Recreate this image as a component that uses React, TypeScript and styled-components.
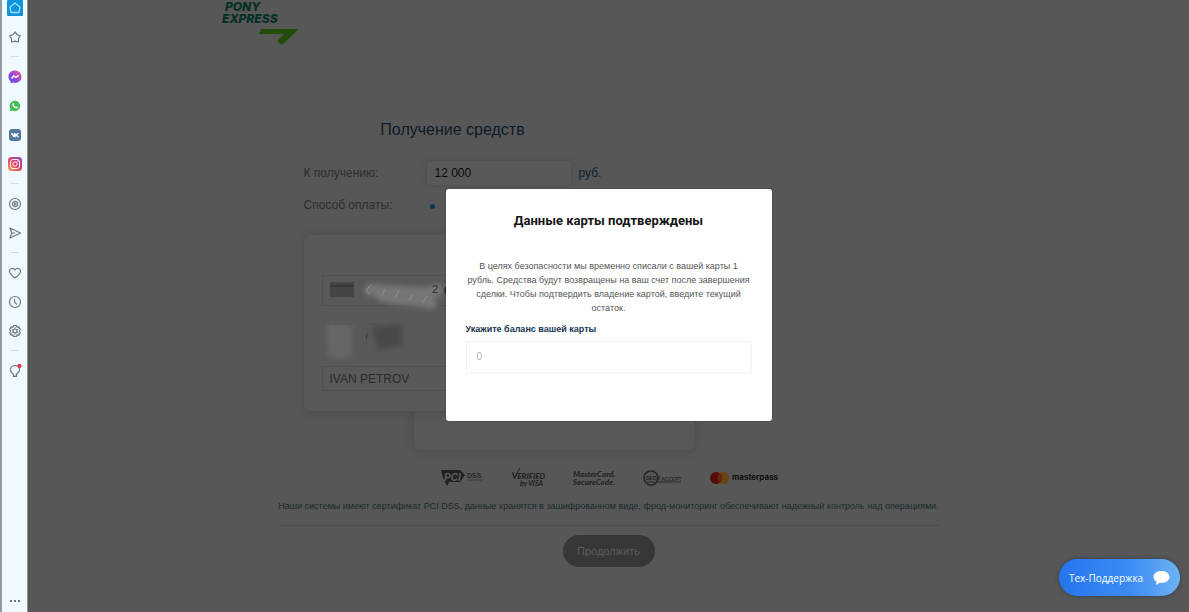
import React from "react";
import styled, { createGlobalStyle } from "styled-components";

const Global = createGlobalStyle`
  *, *::before, *::after { box-sizing: border-box; }
  html, body, #root { height: 100%; }
  body { margin: 0; background: #575757; font-family: "Liberation Sans", Arial, sans-serif; }
  button, input { font: inherit; }
  button { padding: 0; border: 0; background: none; cursor: pointer; }
`;

const Shell = styled.div`
  display: flex;
  min-height: 100%;
`;

const Sidebar = styled.nav`
  flex: none;
  width: 28px;
  display: flex;
  flex-direction: column;
  align-items: center;
  background: #eff9fe;
  border-left: 2px solid #8f9aa5;
  border-right: 1px solid #8b9095;
`;

const SideButton = styled.button<{ $edge?: "top" | "bottom" }>`
  display: flex;
  align-items: center;
  justify-content: center;
  width: 24px;
  height: ${(p) => (p.$edge ? 22 : 29)}px;
  padding-bottom: ${(p) => (p.$edge === "top" ? 6 : 0)}px;
  svg { display: block; flex: none; }
`;

const SideRule = styled.hr`
  width: 8px;
  height: 1px;
  margin: 5px 0;
  border: 0;
  background: #d3dce2;
`;

const Spacer = styled.div`
  flex: 1;
`;

const Stage = styled.main`
  position: relative;
  flex: 1;
  min-width: 0;
  display: flex;
  flex-direction: column;
  align-items: center;
  border-bottom: 1px solid #64545a;
`;

const Header = styled.header`
  width: 100%;
  max-width: 774px;
  height: 120px;
  svg { display: block; }
`;

const Form = styled.form`
  width: 100%;
  max-width: 610px;
`;

const Title = styled.h1`
  width: 298px;
  margin: 0;
  font-size: 16px;
  line-height: 20px;
  font-weight: 400;
  text-align: center;
  color: #0e1a28;
`;

const Row = styled.div<{ $gap: number }>`
  display: flex;
  align-items: center;
  height: 24px;
  margin-top: ${(p) => p.$gap}px;
  font-size: 12px;
  color: #2b2f31;
`;

const RowLabel = styled.label`
  width: 123px;
`;

const Amount = styled.input`
  width: 144px;
  height: 24px;
  padding: 0 8px;
  border: 0;
  border-radius: 3px;
  background: #595959;
  box-shadow: 0 0 5px #4b4b4b;
  font-size: 12px;
  color: #0a0a0a;
  outline: 0;
`;

const Unit = styled.span`
  margin-left: 8px;
  color: #10202c;
`;

const Method = styled.input`
  appearance: none;
  width: 5px;
  height: 5px;
  margin: 2px 3px 0;
  border-radius: 50%;
  background: #063a55;
`;

const Cards = styled.div`
  display: grid;
  grid-template-columns: 110px 170px 110px;
  grid-template-rows: 40px 136px 39px;
  margin-top: 18px;
`;

const BackCard = styled.div`
  grid-area: 2 / 2 / 4 / 4;
  border-radius: 6px;
  background: #585858;
  box-shadow: 0 1px 8px #4b4b4b;
`;

const FrontCard = styled.div`
  grid-area: 1 / 1 / 3 / 3;
  display: flex;
  flex-direction: column;
  padding: 40px 18px 0;
  border-radius: 6px;
  background: #595959;
  box-shadow: 0 1px 8px #4b4b4b;
`;

const CardField = styled.div`
  position: relative;
  height: 31px;
  border: 1px solid #515151;
`;

const Smudge = styled.svg`
  position: absolute;
  left: 0;
  top: 0;
  overflow: visible;
`;

const CardMeta = styled.div`
  height: 60px;
  svg { display: block; overflow: visible; }
`;

const Holder = styled.input`
  width: 100%;
  height: 25px;
  padding: 0 7px;
  border: 1px solid #505050;
  background: transparent;
  font-size: 12px;
  color: #2b2b2b;
  outline: 0;
`;

const Footer = styled.footer`
  width: 100%;
  max-width: 662px;
  display: flex;
  flex-direction: column;
  align-items: center;
`;

const Badges = styled.div`
  display: flex;
  align-items: center;
  justify-content: space-between;
  width: 336px;
  height: 20px;
  margin-top: 18px;
  svg { display: block; overflow: visible; }
`;

const Notice = styled.p`
  align-self: stretch;
  margin: 0;
  padding: 12px 0 13px;
  border-bottom: 1px solid #4d4d4d;
  font-size: 9px;
  line-height: 12px;
  text-align: center;
  white-space: nowrap;
  color: #1b2a2b;
`;

const Continue = styled.button`
  width: 92px;
  height: 32px;
  margin-top: 9px;
  border-radius: 16px;
  background: #373737;
  color: #5c5c5c;
  font-size: 11px;
`;

const Overlay = styled.div`
  position: absolute;
  inset: 0;
  display: flex;
  align-items: center;
  justify-content: center;
  padding-bottom: 2px;
`;

const Dialog = styled.section`
  width: 326px;
  height: 232px;
  padding: 22px 20px;
  border-radius: 3px;
  background: #fff;
  box-shadow: 0 0 2px #444;
`;

const DialogTitle = styled.h2`
  margin: 0;
  font-family: Roboto, "Liberation Sans", sans-serif;
  font-size: 13px;
  line-height: 20px;
  text-align: center;
  color: #161616;
`;

const DialogText = styled.p`
  margin: 28px 0 0;
  font-size: 9px;
  line-height: 14px;
  text-align: center;
  color: #555;
`;

const BalanceLabel = styled.label`
  display: block;
  margin-top: 6px;
  font-size: 9px;
  line-height: 16px;
  font-weight: 700;
  color: #17354f;
`;

const Balance = styled.input`
  display: block;
  width: 100%;
  height: 32px;
  margin-top: 4px;
  padding: 0 10px;
  border: 1px solid #f1f1f1;
  border-radius: 2px;
  background: #fff;
  font-size: 10px;
  outline: 0;
  &::placeholder { color: #b5b5b5; opacity: 1; }
`;

const Support = styled.button`
  position: absolute;
  right: 9px;
  bottom: 15px;
  display: flex;
  align-items: center;
  justify-content: space-between;
  width: 121px;
  height: 37px;
  padding: 0 10px;
  border-radius: 19px;
  background: linear-gradient(90deg, #2475ee, #3d8cf4 60%, #6db4f2);
  box-shadow: 0 0 4px #2f3f55;
  color: #fff;
  font-family: "Open Sans", "Noto Sans", sans-serif;
  font-size: 10px;
  font-weight: 500;
  white-space: nowrap;
`;

const Line = ({ children }: { children: React.ReactNode }) => (
  <svg width="14" height="14" viewBox="0 0 14 14" fill="none" stroke="#6d7a85" strokeWidth="1.2" strokeLinejoin="round" strokeLinecap="round">
    {children}
  </svg>
);

const icons = {
  home: (
    <svg width="16" height="16" viewBox="0 0 16 16">
      <rect width="16" height="16" rx="1" fill="#0f93dc" />
      <path d="M3 7.200 8 3l5 4.200-1 5.300H4z" fill="none" stroke="#9be0ff" strokeWidth="1.300" strokeLinejoin="round" />
    </svg>
  ),
  star: <Line><path d="M7 1.800 9 4.600 12.400 5.700 10.500 8.500 10.400 12 7 11.200 3.600 12 3.500 8.500 1.600 5.700 5 4.600z" /></Line>,
  messenger: (
    <svg width="14" height="14" viewBox="0 0 14 14">
      <defs>
        <linearGradient id="msg" x1="0" y1="1" x2="1" y2="0">
          <stop offset="0" stopColor="#4a55ee" />
          <stop offset=".5" stopColor="#9b45dc" />
          <stop offset="1" stopColor="#f0648c" />
        </linearGradient>
      </defs>
      <path d="M7 .5C3.200.5.500 3.200.500 6.800c0 1.900.8 3.500 2.100 4.700v2l1.900-1c.8.300 1.600.4 2.500.4 3.800 0 6.500-2.700 6.500-6.100S10.800.5 7 .5z" fill="url(#msg)" />
      <path d="m3.500 8.500 2.200-2.600 2.300 1.500 2.500-2" fill="none" stroke="#fff" strokeWidth="1.500" />
    </svg>
  ),
  whatsapp: (
    <svg width="12" height="12" viewBox="0 0 12 12">
      <path d="M.8 11.200 1.500 8.600A5.200 5.200 0 1 1 3.500 10.500z" fill="#43bd55" />
      <path d="M3.700 3.300c.7-.8 1.200-.2 1.500.7.2.5-.4.800-.3 1.100.5 1 1.100 1.500 2 1.900.4.100.6-.7 1-.5 1 .4 1.200.7.900 1.300-.6 1.200-2.200.9-3.500 0C3.900 6.800 2.700 4.800 3.700 3.300z" fill="#fff" />
    </svg>
  ),
  vk: (
    <svg width="12" height="12" viewBox="0 0 12 12">
      <rect width="12" height="12" rx="3" fill="#54799f" />
      <path d="M2 4h1.500l1.300 2.300V4h1.700v1.600L8.300 4H10L8.200 6l2 2.200H8.500L6.800 6.800v1.400C4 8.400 2.500 6.500 2 4z" fill="#fff" />
    </svg>
  ),
  instagram: (
    <svg width="14" height="14" viewBox="0 0 14 14">
      <defs>
        <linearGradient id="inst" x1="0" y1="1" x2="1" y2="0">
          <stop offset="0" stopColor="#f8b24d" />
          <stop offset=".45" stopColor="#e5405a" />
          <stop offset="1" stopColor="#8a42c8" />
        </linearGradient>
      </defs>
      <rect width="14" height="14" rx="3.500" fill="url(#inst)" />
      <g fill="none" stroke="#fff">
        <rect x="2.500" y="2.500" width="9" height="9" rx="2.500" />
        <circle cx="7" cy="7" r="2.200" />
      </g>
      <circle cx="9.800" cy="4.200" r=".6" fill="#fff" />
    </svg>
  ),
  player: <Line><circle cx="7" cy="7" r="5.500" /><circle cx="7" cy="7" r="2.600" /><path d="M6.500 6v2L8 7z" /></Line>,
  send: <Line><path d="M2 2 12.500 7 2 12l1.700-5zM3.700 7h3" /></Line>,
  heart: <Line><path d="M7 12C4 9.800 1.500 7.800 1.500 5.200 1.500 2.200 5.300 1.300 7 4c1.700-2.700 5.500-1.800 5.500 1.200C12.500 7.800 10 9.800 7 12z" /></Line>,
  clock: <Line><circle cx="7" cy="7" r="5.500" /><path d="M6.500 4v3l2 2" /></Line>,
  gear: (
    <Line>
      <path d="M5.500 1.500h3l.6 1.700 1.800-.3 1.500 2.600L11.200 7l1.200 1.500-1.500 2.600-1.800-.3-.6 1.700h-3l-.6-1.700-1.800.3-1.500-2.600L2.800 7 1.600 5.500l1.500-2.600 1.800.3z" />
      <circle cx="7" cy="7" r="2" />
      <path d="M7 3v2M7 9v2M3.500 5l1.800 1M8.700 8l1.800 1M3.500 9l1.800-1M8.700 6l1.800-1" strokeWidth=".8" />
    </Line>
  ),
  bulb: (
    <Line>
      <path d="M5.500 10C3.500 9 2.500 7.500 2.500 5.800A4.500 4.500 0 0 1 7 1.500c2.500 0 4.500 2 4.500 4.300 0 1.700-1 3.200-3 4.200v2.500h-3zM6 12h2" />
      <circle cx="11.500" cy="2" r="2.100" fill="#e2364f" stroke="none" />
    </Line>
  ),
  more: (
    <svg width="12" height="4" viewBox="0 0 12 4" fill="#4b5660">
      <circle cx="2" cy="2" r="1.100" />
      <circle cx="6" cy="2" r="1.100" />
      <circle cx="10" cy="2" r="1.100" />
    </svg>
  ),
};

const groups: [keyof typeof icons, string][][] = [
  [["home", "Главная"], ["star", "Избранное"]],
  [["messenger", "Messenger"], ["whatsapp", "WhatsApp"], ["vk", "ВКонтакте"], ["instagram", "Instagram"]],
  [["player", "Плеер"], ["send", "Мой поток"]],
  [["heart", "Закладки"], ["clock", "История"], ["gear", "Настройки"]],
  [["bulb", "Советы"]],
];

const Logo = () => (
  <svg width="80" height="48" viewBox="0 0 80 48" role="img" aria-label="Pony Express">
    <g fill="#052f24" fontFamily="Inter, sans-serif" fontWeight="800" fontStyle="italic" fontSize="12">
      <text x="3" y="11">PONY</text>
      <text x="0" y="23">EXPRESS</text>
    </g>
    <path d="M39 29h38L60 45l-5-4 7-7H37z" fill="#244d0b" />
  </svg>
);

const CardBadges = () => (
  <Badges>
    <svg width="42" height="18" viewBox="0 0 42 18">
      <path d="M0 1h19l5 5-5 7H8l-2 4-4-8z" fill="#212121" />
      <text x="3" y="12" fontSize="10" fontWeight="700" fontStyle="italic" fill="#606060">PCI</text>
      <text x="26" y="9" fontSize="7" fontWeight="700" fill="#2a2a2a">DSS</text>
      <path d="M26 11h15" stroke="#3a3a3a" />
    </svg>
    <svg width="34" height="18" viewBox="0 0 34 18">
      <path d="M1 3l3 5 5-9" fill="none" stroke="#282828" />
      <g fill="#242424" fontWeight="900" fontStyle="italic" fontFamily="Lato, sans-serif">
        <text x="1" y="10" fontSize="8">VERIFIED</text>
        <text x="9" y="17" fontSize="7">by VISA</text>
      </g>
    </svg>
    <svg width="42" height="18" viewBox="0 0 42 18">
      <g fill="#242424" fontWeight="900" fontStyle="italic" fontSize="8" fontFamily="Lato, sans-serif">
        <text x="0" y="8">MasterCard.</text>
        <text x="0" y="16">SecureCode.</text>
      </g>
    </svg>
    <svg width="39" height="18" viewBox="0 0 39 18">
      <circle cx="8" cy="9" r="7" fill="none" stroke="#242424" strokeWidth="1.500" />
      <text x="3" y="11" fontSize="5" fontWeight="700" fill="#1e1e1e">SECU</text>
      <text x="18" y="12" fontSize="5" fontWeight="700" fill="#2a2a2a">ACCEPT</text>
      <path d="M4 13h34" stroke="#2a2a2a" />
    </svg>
    <svg width="67" height="18" viewBox="0 0 67 18">
      <circle cx="13" cy="9" r="6" fill="#6a4410" />
      <circle cx="6" cy="9" r="6" fill="#560b0b" />
      <path d="M9.500 4.200a6 6 0 0 1 0 9.600 6 6 0 0 1 0-9.600z" fill="#65260b" />
      <text x="22" y="11" fontSize="8" fontWeight="700" fontFamily="Inter, sans-serif" fill="#101010">masterpass</text>
    </svg>
  </Badges>
);

export default function App() {
  return (
    <>
      <Global />
      <Shell>
        <Sidebar>
          {groups.map((group, i) => (
            <React.Fragment key={i}>
              {i > 0 && <SideRule />}
              {group.map(([name, label]) => (
                <SideButton key={name} type="button" aria-label={label} $edge={name === "home" ? "top" : undefined}>
                  {icons[name]}
                </SideButton>
              ))}
            </React.Fragment>
          ))}
          <Spacer />
          <SideButton type="button" aria-label="Ещё" $edge="bottom">{icons.more}</SideButton>
        </Sidebar>
        <Stage>
          <Header><Logo /></Header>
          <Form onSubmit={(e) => e.preventDefault()}>
            <Title>Получение средств</Title>
            <Row $gap={21}>
              <RowLabel htmlFor="amount">К получению:</RowLabel>
              <Amount id="amount" defaultValue="12 000" readOnly />
              <Unit>руб.</Unit>
            </Row>
            <Row $gap={8}>
              <RowLabel htmlFor="method">Способ оплаты:</RowLabel>
              <Method id="method" type="radio" defaultChecked />
            </Row>
            <Cards>
              <BackCard />
              <FrontCard>
                <CardField>
                  <Smudge width="130" height="38" viewBox="0 0 130 38">
                    <defs>
                      <filter id="soft" filterUnits="userSpaceOnUse" x="-20" y="-20" width="180" height="100">
                        <feGaussianBlur stdDeviation="2.500" />
                      </filter>
                    </defs>
                    <rect x="7" y="6" width="24" height="15" fill="#454545" />
                    <path d="M7 10h24" stroke="#373737" strokeWidth="2" />
                    <path d="M47 14C62 15 80 16 96 17c8 1 14-1 18-3M58 19c14 5 28 3 50 8" fill="none" stroke="#767676" strokeWidth="12" strokeLinecap="round" filter="url(#soft)" />
                    <g fill="none" stroke="#8f8f8f" strokeWidth="1">
                      <path d="M48 9l-5 5 3 4M62 13l-3 7M76 14l-4 8M90 18l-4 6M104 20l-5 7" />
                    </g>
                    <text x="109" y="17" fontSize="11" fill="#303030">2</text>
                    <text x="121" y="19" fontSize="12" fontWeight="700" fill="#101010">0</text>
                  </Smudge>
                </CardField>
                <CardMeta>
                  <svg width="90" height="60" viewBox="0 0 90 60">
                    <g filter="url(#soft)">
                      <path d="M4 18h26v30q-13 10-24 0z" fill="#666" />
                      <path d="M50 21l30-3v22l-24 4z" fill="#484848" />
                    </g>
                    <path d="M3 18h28M46 18h36" stroke="#505050" strokeDasharray="2 1" />
                    <path d="M46 27q-3 3-1 6" fill="none" stroke="#333" />
                  </svg>
                </CardMeta>
                <Holder aria-label="Владелец карты" defaultValue="IVAN PETROV" readOnly />
              </FrontCard>
            </Cards>
          </Form>
          <Footer>
            <CardBadges />
            <Notice>
              Наши системы имеют сертификат PCI DSS, данные хранятся в зашифрованном виде, фрод-мониторинг обеспечивают надежный контроль над операциями.
            </Notice>
            <Continue type="button">Продолжить</Continue>
          </Footer>
          <Overlay>
            <Dialog role="dialog" aria-labelledby="dialog-title">
              <DialogTitle id="dialog-title">Данные карты подтверждены</DialogTitle>
              <DialogText>
                В целях безопасности мы временно списали с вашей карты 1 рубль. Средства будут возвращены на ваш счет после завершения сделки. Чтобы подтвердить владение картой, введите текущий остаток.
              </DialogText>
              <BalanceLabel htmlFor="balance">Укажите баланс вашей карты</BalanceLabel>
              <Balance id="balance" placeholder="0" readOnly />
            </Dialog>
          </Overlay>
          <Support type="button">
            Тех-Поддержка
            <svg width="17" height="16" viewBox="0 0 17 16">
              <path d="M8.500 1C4 1 .5 3.500.5 7c0 2 1.200 3.700 3 4.700L3 15l4-2.200 1.500.1c4.500 0 8-2.500 8-5.900S13 1 8.500 1z" fill="#fff" />
            </svg>
          </Support>
        </Stage>
      </Shell>
    </>
  );
}
